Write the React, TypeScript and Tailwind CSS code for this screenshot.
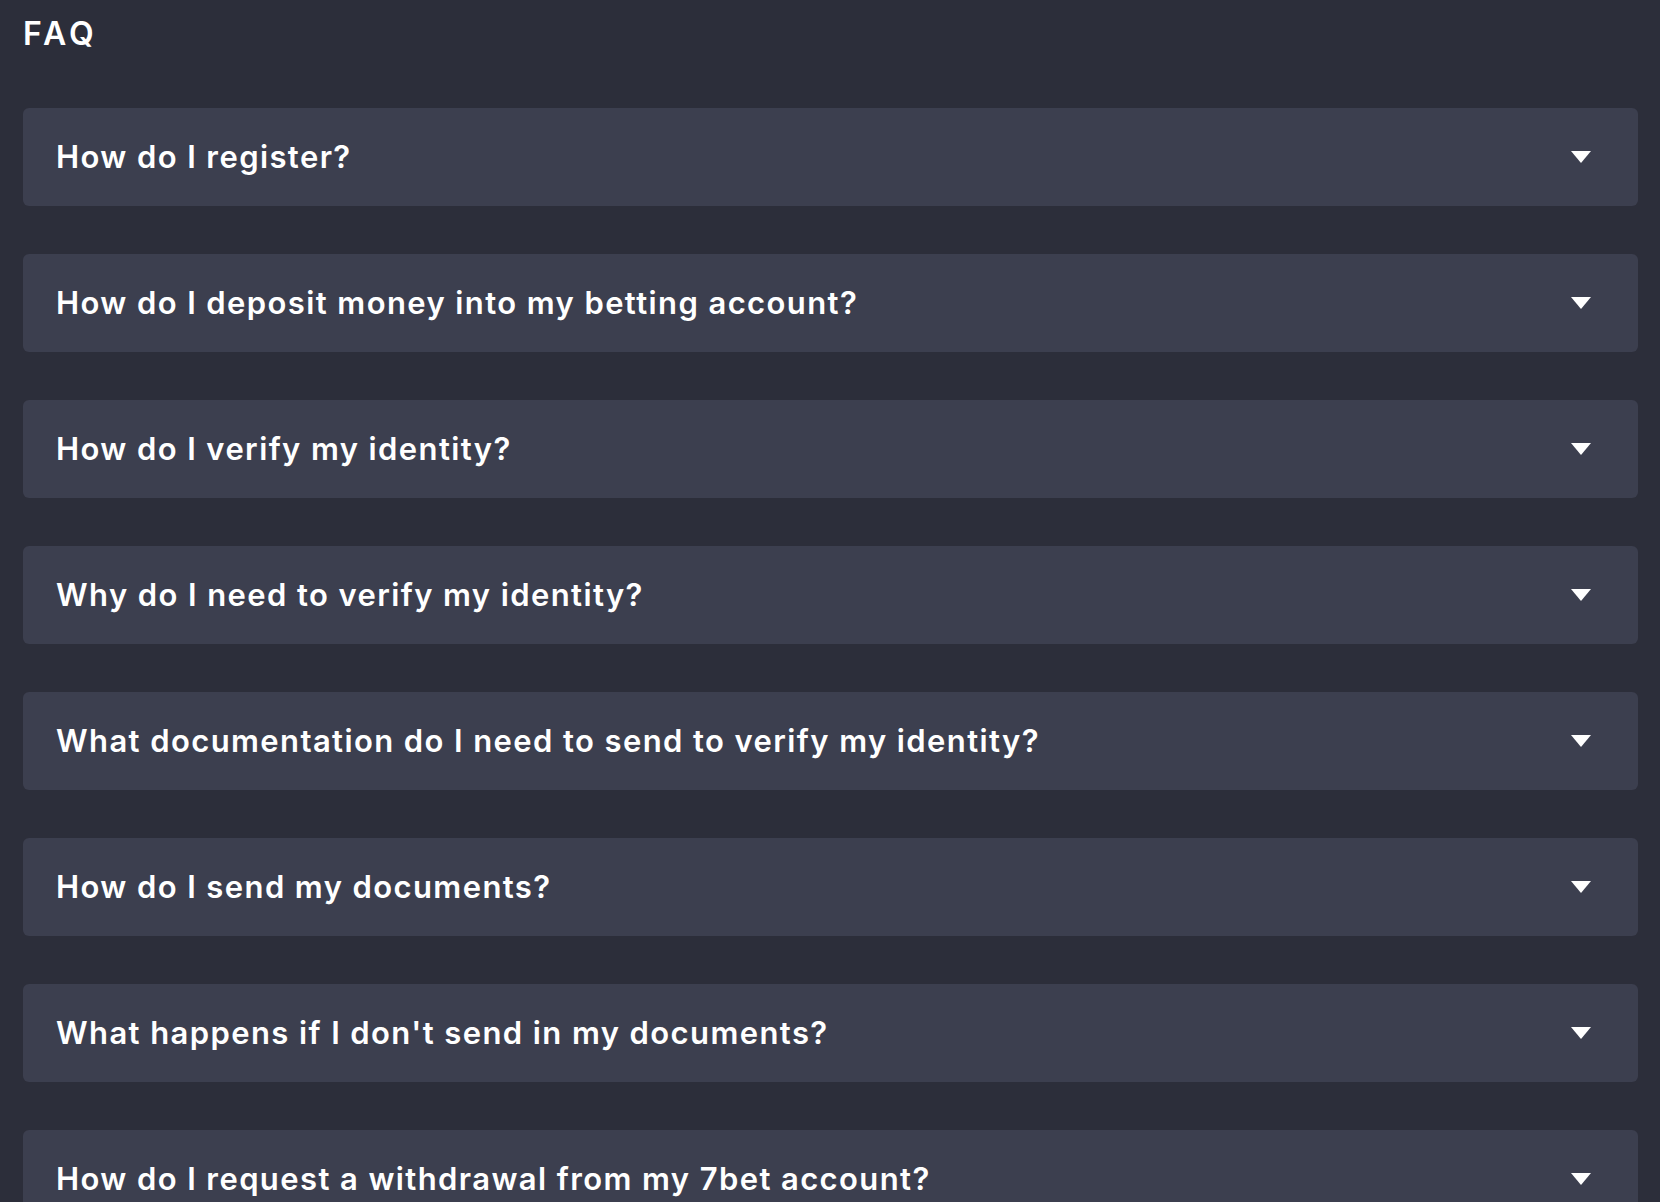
import React from "react";

const items = [
  "How do I register?",
  "How do I deposit money into my betting account?",
  "How do I verify my identity?",
  "Why do I need to verify my identity?",
  "What documentation do I need to send to verify my identity?",
  "How do I send my documents?",
  "What happens if I don't send in my documents?",
  "How do I request a withdrawal from my 7bet account?",
];

export default function App() {
  return (
    <div
      className="min-h-[1202px] bg-[#2c2e3a] pl-[23px] pr-[22px] pt-[15px] text-white"
      style={{ fontFamily: "Inter, 'Noto Sans', sans-serif" }}
    >
      <h1 className="text-[32px] font-semibold leading-[37px] tracking-[4px]">FAQ</h1>
      <div className="mt-[56px] flex flex-col gap-[48px]">
        {items.map((q) => (
          <div
            key={q}
            className="flex h-[98px] items-center justify-between rounded-[6px] bg-[#3c3f4f] pl-[33px] pr-[47px]"
          >
            <span className="text-[31px] font-semibold leading-[36px] tracking-[1.4px]">{q}</span>
            <svg width="20" height="12" viewBox="0 0 20 12">
              <path d="M0 0 L20 0 L10 12 Z" fill="white" />
            </svg>
          </div>
        ))}
      </div>
    </div>
  );
}
